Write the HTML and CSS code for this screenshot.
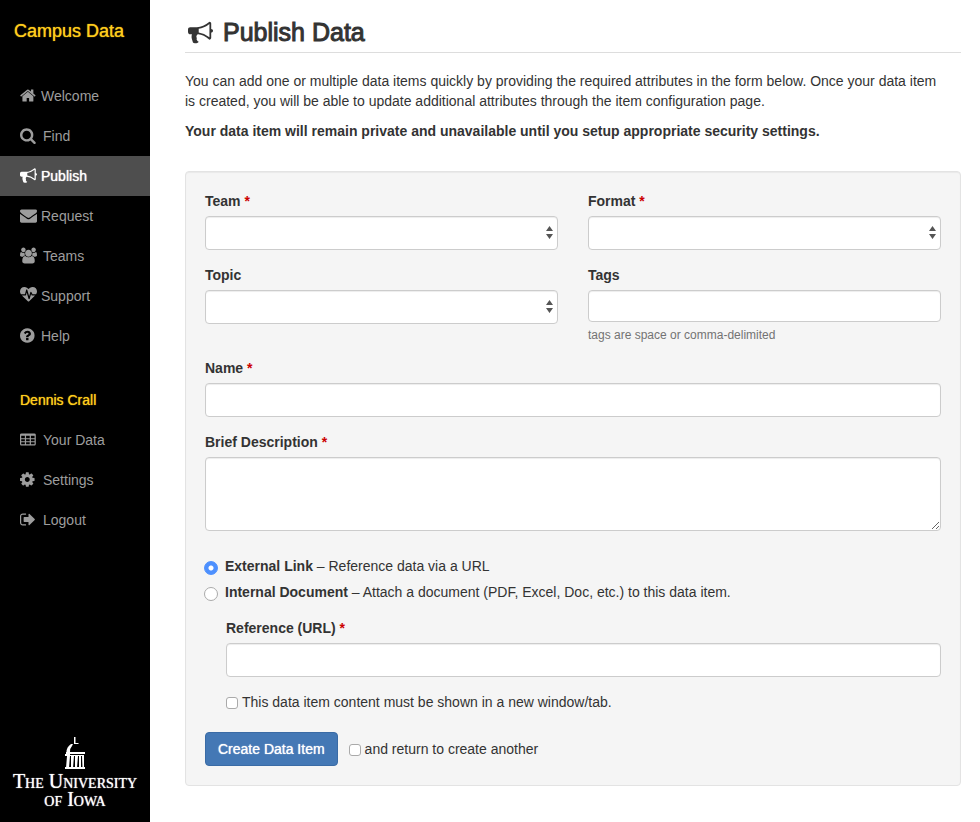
FILE: index.html
```html
<!DOCTYPE html>
<html lang="en">
<head>
<meta charset="utf-8">
<title>Publish Data</title>
<link rel="stylesheet" href="styles.css">
</head>
<body>
<div class="page">
  <aside class="sidebar">
    <a class="brand" href="#">Campus Data</a>
    <nav class="nav">
      <a class="nav-link" href="#"><svg class="icon" viewBox="64 0 1792 1792" aria-hidden="true"><path d="M1472 992v480q0 26-19 45t-45 19h-384v-384h-256v384h-384q-26 0-45-19t-19-45v-480q0-1 .5-3t.5-3l575-474 575 474q1 2 1 6zm223-69l-62 74q-8 9-21 11h-3q-13 0-21-7l-692-577-692 577q-12 8-24 7-13-2-21-11l-62-74q-8-10-7-23.5t11-21.5l719-599q32-26 76-26t76 26l244 204v-195q0-14 9-23t23-9h192q14 0 23 9t9 23v408l219 182q10 8 11 21.5t-7 23.5z"/></svg>Welcome</a>
      <a class="nav-link wide" href="#"><svg class="icon" viewBox="64 0 1792 1792" aria-hidden="true"><path d="M1216 832q0-185-131.5-316.5t-316.5-131.5-316.5 131.5-131.5 316.5 131.5 316.5 316.5 131.5 316.5-131.5 131.5-316.5zm512 832q0 52-38 90t-90 38q-54 0-90-38l-343-342q-179 124-399 124-143 0-273.5-55.5t-225-150-150-225-55.5-273.5 55.5-273.5 150-225 225-150 273.5-55.5 273.5 55.5 225 150 150 225 55.5 273.5q0 220-124 399l343 343q37 37 37 90z"/></svg>Find</a>
      <a class="nav-link active" href="#" aria-current="page"><svg class="icon" viewBox="0 0 1792 1792" aria-hidden="true"><path d="M1664 640q53 0 90.500 37.500t37.500 90.500-37.500 90.500-90.500 37.500v384q0 52-38 90t-90 38q-417-347-812-380-58 19-91 66t-31 100.500 40 92.500q-20 33-23 65.500t6 58 33.500 55 48 50 61.500 50.500q-29 58-111.500 83t-168.500 11.500-132-55.500q-7-23-29.500-87.500t-32-94.500-23-89-15-101 3.500-98.500 22-110.500h-122q-66 0-113-47t-47-113v-192q0-66 47-113t113-47h480q435 0 896-384 52 0 90 38t38 90v384zm-128 604v-954q-394 302-768 343v270q377 42 768 341z"/></svg>Publish</a>
      <a class="nav-link" href="#"><svg class="icon" viewBox="0 0 1792 1792" aria-hidden="true"><path d="M1792 710v794q0 66-47 113t-113 47h-1472q-66 0-113-47t-47-113v-794q44 49 101 87 362 246 497 345 57 42 92.500 65.500t94.500 48 110 24.500h2q51 0 110-24.500t94.500-48 92.500-65.500q170-123 498-345 57-39 100-87zm0-294q0 79-49 151t-122 123q-376 261-468 325-10 7-42.500 31t-54 38.500-52 32.500-57.500 27-50 9h-2q-23 0-50-9t-57.500-27-52-32.500-54-38.500-42.500-31q-91-64-262-182.500t-205-142.500q-62-42-117-115.500t-55-136.500q0-78 41.500-130t118.500-52h1472q65 0 112.500 47t47.500 113z"/></svg>Request</a>
      <a class="nav-link wide" href="#"><svg class="icon" viewBox="-64 0 1920 1792" aria-hidden="true"><path d="M529 896q-162 5-265 128h-134q-82 0-138-40.500t-56-118.500q0-353 124-353 6 0 43.500 21t97.500 42.500 119 21.500q67 0 133-23-5 37-5 66 0 139 81 256zm1071 637q0 120-73 189.500t-194 69.500h-874q-121 0-194-69.500t-73-189.500q0-53 3.500-103.500t14-109 26.500-108.500 43-97.500 62-81 85.500-53.500 111.500-20q10 0 43 21.500t73 48 107 48 135 21.500 135-21.500 107-48 73-48 43-21.500q61 0 111.500 20t85.500 53.500 62 81 43 97.500 26.500 108.500 14 109 3.500 103.500zm-1024-1277q0 106-75 181t-181 75-181-75-75-181 75-181 181-75 181 75 75 181zm704 384q0 159-112.500 271.500t-271.500 112.500-271.500-112.500-112.500-271.500 112.500-271.500 271.500-112.500 271.500 112.500 112.500 271.500zm576 225q0 78-56 118.500t-138 40.500h-134q-103-123-265-128 81-117 81-256 0-29-5-66 66 23 133 23 59 0 119-21.500t97.500-42.500 43.500-21q124 0 124 353zm-128-609q0 106-75 181t-181 75-181-75-75-181 75-181 181-75 181 75 75 181z"/></svg>Teams</a>
      <a class="nav-link" href="#"><svg class="icon" viewBox="0 0 1792 1792" aria-hidden="true"><path d="M1280 896h305q-5 6-10 10.500t-9 7.500l-3 4-623 600q-18 18-44 18t-44-18l-624-602q-5-2-21-20h369q22 0 39.500-13.500t22.500-34.500l70-281 190 667q6 20 23 33t39 13q21 0 38-13t23-33l146-485 56 112q18 35 57 35zm512-428q0 145-103 300h-369l-111-221q-8-17-25.500-27t-36.500-8q-45 5-56 46l-129 430-196-686q-6-20-23.500-33t-39.500-13-39 13.500-22 34.500l-116 464h-423q-103-155-103-300 0-220 127-344t351-124q62 0 126.500 21.500t120 58 95.500 68.500 76 68q36-36 76-68t95.500-68.500 120-58 126.500-21.500q224 0 351 124t127 344z"/></svg>Support</a>
      <a class="nav-link" href="#"><svg class="icon" viewBox="128 0 1792 1792" aria-hidden="true"><path d="M1024 1376v-192q0-14-9-23t-23-9h-192q-14 0-23 9t-9 23v192q0 14 9 23t23 9h192q14 0 23-9t9-23zm256-672q0-88-55.500-163t-138.500-116-170-41q-243 0-371 213-15 24 8 42l132 100q7 6 19 6 16 0 25-12 53-68 86-92 34-24 86-24 48 0 85.500 26t37.500 59q0 38-20 61t-68 45q-63 28-115.500 86.500t-52.500 125.500v36q0 14 9 23t23 9h192q14 0 23-9t9-23q0-19 21.500-49.500t54.500-49.500q32-18 49-28.500t46-35 44.500-48 28-60.500 12.500-81zm384 192q0 209-103 385.500t-279.500 279.500-385.500 103-385.500-103-279.500-279.500-103-385.500 103-385.500 279.500-279.500 385.500-103 385.500 103 279.500 279.500 103 385.500z"/></svg>Help</a>
    </nav>
    <h2 class="user">Dennis Crall</h2>
    <nav class="nav">
      <a class="nav-link wide" href="#"><svg class="icon" viewBox="64 0 1792 1792" aria-hidden="true"><path fill-rule="evenodd" d="M224 256h1344q66 0 113 47t47 113v960q0 66-47 113t-113 47h-1344q-66 0-113-47t-47-113v-960q0-66 47-113t113-47zM192 512h384v256h-384zM704 512h384v256h-384zM1216 512h384v256h-384zM192 864h384v224h-384zM704 864h384v224h-384zM1216 864h384v224h-384zM192 1184h384v224h-384zM704 1184h384v224h-384zM1216 1184h384v224h-384z"/></svg>Your Data</a>
      <a class="nav-link wide" href="#"><svg class="icon" viewBox="128 0 1792 1792" aria-hidden="true"><path d="M1152 896q0-106-75-181t-181-75-181 75-75 181 75 181 181 75 181-75 75-181zm512-109v222q0 12-8 23t-20 13l-185 28q-19 54-39 91 35 50 107 138 10 12 10 25t-9 23q-27 37-99 108t-94 71q-12 0-26-9l-138-108q-44 23-91 38-16 136-29 186-7 28-36 28h-222q-14 0-24.500-8.500t-11.500-21.500l-28-184q-49-16-90-37l-141 107q-10 9-25 9-14 0-25-11-126-114-165-168-7-10-7-23 0-12 8-23 15-21 51-66.500t54-70.500q-27-50-41-99l-183-27q-13-2-21-12.500t-8-23.500v-222q0-12 8-23t19-13l186-28q14-46 39-92-40-57-107-138-10-12-10-24 0-10 9-23 26-36 98.500-107.500t94.500-71.500q13 0 26 10l138 107q44-23 91-38 16-136 29-186 7-28 36-28h222q14 0 24.500 8.500t11.500 21.500l28 184q49 16 90 37l142-107q9-9 24-9 13 0 25 10 129 119 165 170 7 8 7 22 0 12-8 23-15 21-51 66.500t-54 70.500q26 50 41 98l183 28q13 2 21 12.500t8 23.500z"/></svg>Settings</a>
      <a class="nav-link wide" href="#"><svg class="icon" viewBox="64 0 1792 1792" aria-hidden="true"><path d="M704 1440q0 4 1 20t.5 26.500-3 23.500-10 19.500-20.500 6.500h-320q-119 0-203.500-84.500t-84.500-203.500v-704q0-119 84.500-203.500t203.500-84.500h320q13 0 22.500 9.500t9.500 22.500q0 4 1 20t.5 26.500-3 23.500-10 19.500-20.500 6.500h-320q-66 0-113 47t-47 113v704q0 66 47 113t113 47h320q24 0 32 32zm928-544q0 26-19 45l-544 544q-19 19-45 19t-45-19-19-45v-288h-448q-26 0-45-19t-19-45v-384q0-26 19-45t45-19h448v-288q0-26 19-45t45-19 45 19l544 544q19 19 19 45z"/></svg>Logout</a>
    </nav>
    <a class="university" href="#">
      <svg class="dome" viewBox="0 0 20 32" aria-hidden="true">
        <path d="M9 0h1.500v6h3v1h-4.500zM6 7h2l-1 2q-2 2-2 6h-3.500q0-5 4.500-8z"/>
        <path d="M1 15h19v2h-19zM0 17h5v2h-5zM1 18h18v1h-18zM2 19h3l-1 12h-3zM6 19h3l-1 12h-2zM10 19h3l-1 12h-2zM14 19h2v12h-2zM17 19h2v12h-1.500zM0 30h20v2h-20z"/>
      </svg>
      <span>The University</span>
      <span>of Iowa</span>
    </a>
  </aside>
  <main class="main">
    <h1 class="title"><svg class="title-icon" viewBox="0 0 1792 1792" aria-hidden="true"><path d="M1664 640q53 0 90.500 37.500t37.500 90.500-37.500 90.500-90.500 37.500v384q0 52-38 90t-90 38q-417-347-812-380-58 19-91 66t-31 100.500 40 92.500q-20 33-23 65.500t6 58 33.500 55 48 50 61.500 50.500q-29 58-111.500 83t-168.500 11.500-132-55.500q-7-23-29.500-87.500t-32-94.500-23-89-15-101 3.500-98.500 22-110.500h-122q-66 0-113-47t-47-113v-192q0-66 47-113t113-47h480q435 0 896-384 52 0 90 38t38 90v384zm-128 604v-954q-394 302-768 343v270q377 42 768 341z"/></svg>Publish Data</h1>
    <p>You can add one or multiple data items quickly by providing the required attributes in the form below. Once your data item is created, you will be able to update additional attributes through the item configuration page.</p>
    <p><strong>Your data item will remain private and unavailable until you setup appropriate security settings.</strong></p>
    <form class="well">
      <div class="columns">
        <div class="field"><label for="team">Team <span class="req">*</span></label>
          <div class="select"><select class="control" id="team"><option></option></select><svg class="arrows" viewBox="0 0 7 13" aria-hidden="true"><path d="M0 5 3.500 0 7 5zM0 8h7L3.500 13z"/></svg></div></div>
        <div class="field"><label for="format">Format <span class="req">*</span></label>
          <div class="select"><select class="control" id="format"><option></option></select><svg class="arrows" viewBox="0 0 7 13" aria-hidden="true"><path d="M0 5 3.500 0 7 5zM0 8h7L3.500 13z"/></svg></div></div>
        <div class="field"><label for="topic">Topic</label>
          <div class="select"><select class="control" id="topic"><option></option></select><svg class="arrows" viewBox="0 0 7 13" aria-hidden="true"><path d="M0 5 3.500 0 7 5zM0 8h7L3.500 13z"/></svg></div></div>
        <div class="field"><label for="tags">Tags</label>
          <input class="control tags" id="tags" type="text">
          <span class="help">tags are space or comma-delimited</span></div>
      </div>
      <div class="field"><label for="name">Name <span class="req">*</span></label>
        <input class="control" id="name" type="text"></div>
      <div class="field"><label for="description">Brief Description <span class="req">*</span></label>
        <textarea class="control area" id="description"></textarea></div>
      <div class="choices">
        <label class="choice"><input type="radio" name="kind" checked><span><strong>External Link</strong> – Reference data via a URL</span></label>
        <label class="choice"><input type="radio" name="kind"><span><strong>Internal Document</strong> – Attach a document (PDF, Excel, Doc, etc.) to this data item.</span></label>
      </div>
      <div class="nested">
        <div class="field"><label for="url">Reference (URL) <span class="req">*</span></label>
          <input class="control" id="url" type="text"></div>
        <label class="check"><input type="checkbox">This data item content must be shown in a new window/tab.</label>
      </div>
      <div class="actions">
        <button class="submit" type="submit">Create Data Item</button>
        <label class="check"><input type="checkbox">and return to create another</label>
      </div>
    </form>
  </main>
</div>
</body>
</html>
```
FILE: styles.css
```css
* { box-sizing: border-box; }

body {
  margin: 0;
  background: #fff;
  color: #333;
  font: 14px/20px "Liberation Sans", Arial, sans-serif;
}

.page { display: flex; min-height: 100vh; }

/* Sidebar */
.sidebar {
  display: flex;
  flex: 0 0 150px;
  flex-direction: column;
  background: #000;
}
.sidebar a { text-decoration: none; }
.brand {
  padding: 21px 14px 35px;
  color: #ffcd1c;
  font-size: 18px;
  text-shadow: 0 0 1px currentColor;
}
.nav { display: flex; flex-direction: column; }
.nav-link {
  display: flex;
  align-items: center;
  gap: 4px;
  height: 40px;
  padding: 0 20px;
  color: #9d9d9d;
}
.nav-link.wide { gap: 6px; }
.nav-link.active {
  background: #4e4e4e;
  color: #fff;
  text-shadow: 0 0 1px currentColor;
}
.icon {
  width: 17px;
  height: 17px;
  margin-bottom: 2px;
  fill: currentColor;
}
.user {
  margin: 24px 0 0;
  padding: 0 20px;
  color: #ffcd1c;
  font-size: 14px;
  font-weight: 400;
  line-height: 40px;
  text-shadow: 0 0 1px currentColor;
}
.university {
  display: flex;
  flex-direction: column;
  align-items: center;
  margin-top: auto;
  padding-bottom: 14px;
  color: #fff;
  font: small-caps 20px/18px "Liberation Serif", "Times New Roman", serif;
  text-shadow: 0 0 1px currentColor;
  white-space: nowrap;
}
.dome { width: 20px; height: 32px; margin-bottom: 3px; fill: #fff; }

/* Content */
.main { flex: 1; min-width: 0; padding: 12px 19px 36px 35px; }
.title {
  display: flex;
  align-items: center;
  gap: 10px;
  height: 41px;
  margin: 0 0 18px;
  padding-left: 3px;
  border-bottom: 1px solid #ddd;
  font-size: 25px;
  font-weight: 400;
  -webkit-text-stroke: 1px currentColor;
}
.title-icon { width: 25px; height: 25px; fill: currentColor; stroke: none; }
p { margin: 0 0 10px; padding-right: 12px; }

/* Form */
.well {
  margin-top: 30px;
  padding: 19px;
  background: #f5f5f5;
  border: 1px solid #e3e3e3;
  border-radius: 4px;
  box-shadow: inset 0 1px 1px rgba(0, 0, 0, .05);
}
.columns {
  display: grid;
  grid-template-columns: 1fr 1fr;
  column-gap: 30px;
}
.field { display: flex; flex-direction: column; margin-bottom: 15px; }
.field > label { margin-bottom: 5px; font-weight: 700; }
.req { color: #c00; }
.control {
  display: block;
  width: 100%;
  height: 34px;
  margin: 0;
  padding: 6px 12px;
  appearance: none;
  background: #fff;
  border: 1px solid #ccc;
  border-radius: 4px;
  box-shadow: inset 0 1px 1px rgba(0, 0, 0, .075);
  color: #555;
  font: inherit;
}
.tags { height: 32px; }
.area { height: 74px; resize: vertical; }
.select { position: relative; }
.arrows {
  position: absolute;
  top: 10px;
  right: 5px;
  width: 7px;
  height: 13px;
  fill: #555;
  pointer-events: none;
}
.help { margin-top: 5px; color: #737373; font-size: 12px; line-height: 16px; }

.choices {
  display: flex;
  flex-direction: column;
  gap: 6px;
  margin: 25px 0 16px;
}
.choice { display: flex; align-items: center; gap: 7px; }
.choice input {
  width: 14px;
  height: 14px;
  margin: 4px 0 0 -1px;
  appearance: none;
  background: #fff;
  border: 1px solid #aaa;
  border-radius: 50%;
}
.choice input:checked {
  background: radial-gradient(circle, #fff 2px, #4d90fe 3px);
  border-color: #4d90fe;
}
.nested { margin: 0 0 20px 21px; }
.check { display: flex; align-items: center; gap: 4px; }
.check input {
  width: 12px;
  height: 12px;
  margin: 2px 0 0;
  appearance: none;
  background: #fff;
  border: 1px solid #aaa;
  border-radius: 3px;
}
.check input:checked { background: #4d90fe; }
.actions { display: flex; align-items: center; gap: 11px; }
.submit {
  height: 34px;
  padding: 0 12px;
  background: #4478b5;
  border: 1px solid #3a6ba5;
  border-radius: 4px;
  color: #fff;
  font: inherit;
  text-shadow: 0 0 1px currentColor;
}
```
